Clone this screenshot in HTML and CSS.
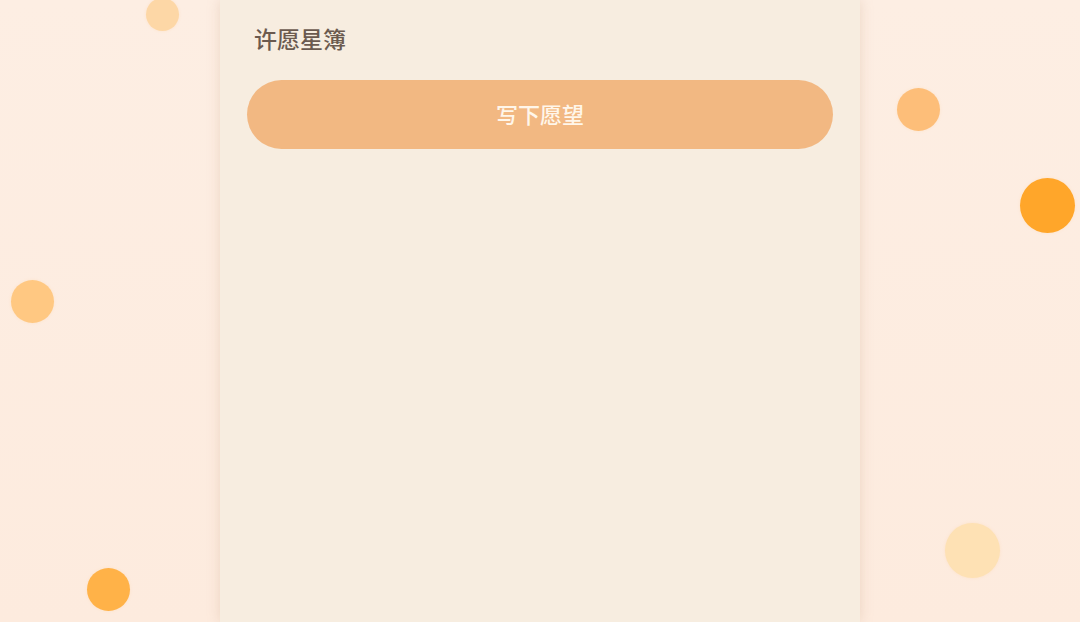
FILE: index.html
```html
<!DOCTYPE html>
<html lang="zh-CN">
<head>
<meta charset="utf-8">
<title>许愿星簿</title>
<link rel="stylesheet" href="styles.css">
</head>
<body>
<div class="bubbles" aria-hidden="true">
  <span class="bubble b1"></span>
  <span class="bubble b2"></span>
  <span class="bubble b3"></span>
  <span class="bubble b4"></span>
  <span class="bubble b5"></span>
  <span class="bubble b6"></span>
</div>
<main class="card">
  <h1 class="title">许愿星簿</h1>
  <button class="wish-btn" type="button">写下愿望</button>
</main>
</body>
</html>
```
FILE: styles.css
```css
* { box-sizing: border-box; }
html, body {
  margin: 0;
  height: 100%;
}
body {
  font-family: "Noto Sans CJK SC", "Noto Sans", sans-serif;
  background: linear-gradient(180deg, #fdeee3 0%, #fdebde 100%);
  display: flex;
  justify-content: center;
  overflow: hidden;
  position: relative;
}
.bubbles {
  position: absolute;
  inset: 0;
  pointer-events: none;
}
.bubble {
  position: absolute;
  border-radius: 50%;
  box-shadow: 0 0 3px rgba(255, 200, 130, 0.25);
}
.b1 { left: 146px; top: -2px; width: 33px; height: 33px; background: #fdd7a6; }
.b2 { left: 897px; top: 88px; width: 43px; height: 43px; background: #fdbe79; }
.b3 { left: 1020px; top: 178px; width: 55px; height: 55px; background: #ffa62a; }
.b4 { left: 11px; top: 280px; width: 43px; height: 43px; background: #ffc882; }
.b5 { left: 87px; top: 568px; width: 43px; height: 43px; background: #ffb248; }
.b6 { left: 945px; top: 523px; width: 55px; height: 55px; background: #fee1b4; }
.card {
  position: relative;
  width: 640px;
  min-height: 100%;
  background: #f7ede0;
  box-shadow: 0 0 12px rgba(190, 150, 120, 0.28);
  padding: 22px 27px 0;
  display: flex;
  flex-direction: column;
  gap: 26px;
}
.title {
  margin: 0;
  padding-left: 7px;
  font-size: 23px;
  line-height: 32px;
  font-weight: 500;
  color: #6b5a4f;
}
.wish-btn {
  height: 69px;
  padding: 0 0 3px;
  border: none;
  border-radius: 35px;
  background: #f2b882;
  color: #fff6ea;
  font-family: inherit;
  font-size: 22px;
  font-weight: 500;
  letter-spacing: 0;
}
```
